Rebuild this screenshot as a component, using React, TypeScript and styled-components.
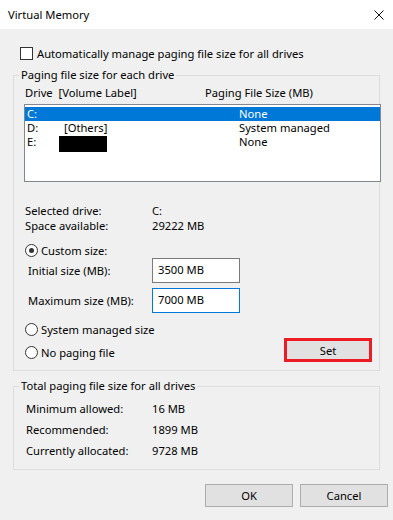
import React from 'react';
import styled, { createGlobalStyle } from 'styled-components';

const GlobalStyle = createGlobalStyle`
  html, body {
    margin: 0;
    padding: 0;
    background: #f0f0f0;
  }
  * {
    box-sizing: border-box;
  }
`;

const Window = styled.div`
  width: 393px;
  height: 520px;
  background: #f0f0f0;
  font-family: "Noto Sans", "Open Sans", sans-serif;
  font-size: 11.2px;
  color: #000;
  overflow: hidden;
`;

const TitleBar = styled.div`
  height: 29px;
  background: #fff;
  display: flex;
  align-items: center;
  justify-content: space-between;
  padding: 0 9px 0 8px;
  line-height: 16px;
`;

const CloseIcon = styled.svg`
  width: 10px;
  height: 10px;
  display: block;
`;

const Body = styled.div`
  padding: 0 13px 0 13px;
`;

const CheckRow = styled.label`
  display: flex;
  align-items: center;
  gap: 4px;
  margin: 17px 0 0 7px;
  line-height: 15px;
`;

const CheckBox = styled.span`
  width: 13px;
  height: 13px;
  border: 1px solid #333;
  background: #fff;
  flex: none;
`;

const Group = styled.fieldset<{ $top: number }>`
  margin: ${p => p.$top}px 0 0 0;
  border: 1px solid #dcdcdc;
  padding: 2px 0 8px 10px;
  min-width: 0;
`;

const Legend = styled.legend`
  padding: 0 2px;
  margin-left: -5px;
  line-height: 16px;
`;

const HeaderRow = styled.div`
  display: grid;
  grid-template-columns: 180px 1fr;
  padding-left: 1px;
  line-height: 16px;
`;

const DriveList = styled.div`
  margin: 3px -2px 0 0;
  height: 78px;
  border: 1px solid #828790;
  background: #fff;
  padding-top: 2px;
`;

const DriveRow = styled.div<{ $selected?: boolean }>`
  display: grid;
  grid-template-columns: 37px 175px 1fr;
  height: 14px;
  line-height: 14px;
  padding-left: 2px;
  background: ${p => (p.$selected ? '#0078d7' : 'transparent')};
  color: ${p => (p.$selected ? '#fff' : '#000')};
`;

const Redacted = styled.span`
  display: block;
  width: 48px;
  height: 16px;
  margin: 1px 0 0 -5px;
  background: #000;
`;

const InfoGrid = styled.div<{ $label: number; $line: number; $pad: number; $top: number }>`
  display: grid;
  grid-template-columns: ${p => p.$label}px 1fr;
  padding-left: ${p => p.$pad}px;
  margin-top: ${p => p.$top}px;
  line-height: ${p => p.$line}px;
`;

const RadioRow = styled.label<{ $top: number }>`
  display: flex;
  align-items: center;
  gap: 3px;
  margin-top: ${p => p.$top}px;
  padding-left: 1px;
  line-height: 15px;
`;

const RadioCircle = styled.span<{ $checked?: boolean }>`
  width: 13px;
  height: 13px;
  border-radius: 50%;
  border: 1px solid #333;
  background: #fff;
  flex: none;
  display: flex;
  align-items: center;
  justify-content: center;
  &::after {
    content: '';
    width: 5px;
    height: 5px;
    border-radius: 50%;
    background: #333;
    display: ${p => (p.$checked ? 'block' : 'none')};
  }
`;

const SizeGrid = styled.div`
  display: grid;
  grid-template-columns: 124px 88px;
  row-gap: 5px;
  padding-left: 4px;
  align-items: center;
`;

const SizeInput = styled.div<{ $focused?: boolean }>`
  height: 25px;
  border: 1px solid ${p => (p.$focused ? '#0078d7' : '#7a7a7a')};
  background: #fff;
  padding: 3px 0 0 5px;
  line-height: 16px;
`;

const LastRow = styled.div`
  display: flex;
  justify-content: space-between;
  align-items: flex-start;
  margin-top: 1px;
  padding-right: 7px;
`;

const Button = styled.div<{ $highlight?: boolean }>`
  width: 88px;
  height: ${p => (p.$highlight ? 24 : 23)}px;
  background: #e1e1e1;
  border: ${p => (p.$highlight ? '3px solid #ed1c24' : '1px solid #adadad')};
  display: flex;
  align-items: center;
  justify-content: center;
  line-height: 15px;
`;

const ButtonBar = styled.div`
  display: flex;
  justify-content: flex-end;
  gap: 7px;
  margin: 14px -8px 0 0;
`;

export default function App() {
  return (
    <Window>
      <GlobalStyle />
      <TitleBar>
        <span>Virtual Memory</span>
        <CloseIcon viewBox="0 0 10 10">
          <path d="M0.5 0.5 L9.5 9.5 M9.5 0.5 L0.5 9.5" stroke="#111" strokeWidth="1" />
        </CloseIcon>
      </TitleBar>
      <Body>
        <CheckRow>
          <CheckBox />
          Automatically manage paging file size for all drives
        </CheckRow>

        <Group $top={6}>
          <Legend>Paging file size for each drive</Legend>
          <HeaderRow>
            <span>Drive&nbsp; [Volume Label]</span>
            <span>Paging File Size (MB)</span>
          </HeaderRow>
          <DriveList>
            <DriveRow $selected>
              <span>C:</span>
              <span />
              <span>None</span>
            </DriveRow>
            <DriveRow>
              <span>D:</span>
              <span>[Others]</span>
              <span>System managed</span>
            </DriveRow>
            <DriveRow>
              <span>E:</span>
              <Redacted />
              <span>None</span>
            </DriveRow>
          </DriveList>

          <InfoGrid $label={127} $line={15} $pad={1} $top={21}>
            <span>Selected drive:</span>
            <span>C:</span>
            <span>Space available:</span>
            <span>29222 MB</span>
          </InfoGrid>

          <RadioRow $top={10}>
            <RadioCircle $checked />
            Custom size:
          </RadioRow>
          <SizeGrid>
            <span>Initial size (MB):</span>
            <SizeInput>3500 MB</SizeInput>
            <span>Maximum size (MB):</span>
            <SizeInput $focused>7000 MB</SizeInput>
          </SizeGrid>

          <RadioRow $top={9}>
            <RadioCircle />
            System managed size
          </RadioRow>
          <LastRow>
            <RadioRow $top={7}>
              <RadioCircle />
              No paging file
            </RadioRow>
            <Button $highlight>Set</Button>
          </LastRow>
        </Group>

        <Group $top={7}>
          <Legend>Total paging file size for all drives</Legend>
          <InfoGrid $label={126} $line={21} $pad={2} $top={2}>
            <span>Minimum allowed:</span>
            <span>16 MB</span>
            <span>Recommended:</span>
            <span>1899 MB</span>
            <span>Currently allocated:</span>
            <span>9728 MB</span>
          </InfoGrid>
        </Group>

        <ButtonBar>
          <Button>OK</Button>
          <Button>Cancel</Button>
        </ButtonBar>
      </Body>
    </Window>
  );
}
